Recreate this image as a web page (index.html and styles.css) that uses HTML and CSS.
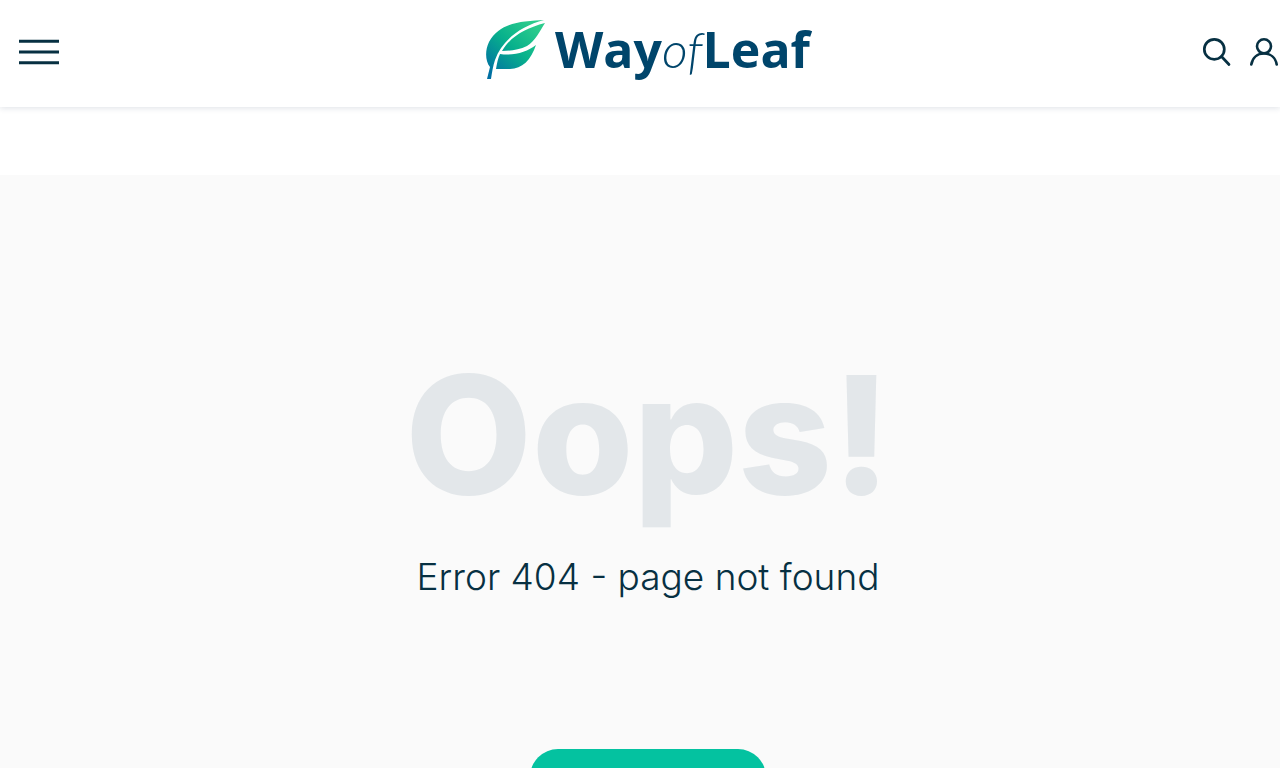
FILE: index.html
```html
<!DOCTYPE html>
<html lang="en">
<head>
<meta charset="utf-8">
<meta name="viewport" content="width=device-width, initial-scale=1">
<title>WayofLeaf</title>
<link rel="stylesheet" href="styles.css">
</head>
<body>
<header class="header">
  <button class="icon-button menu" type="button" aria-label="Menu">
    <svg width="40" height="26" viewBox="0 0 40 26" fill="none" stroke="#073042" stroke-width="3"><path d="M0 2.300H40M0 13H40M0 23.800H40"/></svg>
  </button>
  <a class="logo" href="#">
    <svg class="leaf" width="62" height="60" viewBox="0 0 62 60" aria-hidden="true">
      <defs><linearGradient id="leaf" gradientUnits="userSpaceOnUse" x1="4" y1="54" x2="48" y2="6"><stop offset="0" stop-color="#006fa3"/><stop offset=".55" stop-color="#08b18c"/><stop offset="1" stop-color="#2bcb8c"/></linearGradient></defs>
      <g fill="url(#leaf)">
        <path d="M2 60 5 48C0 42 0 31 4 23C12 8 27 4 40 2.500C47 1.500 54 1.500 59 1C36 7 17 21 10 41C8 47 7 53 6 60Z"/>
        <path d="M60 4C55 12 50 22 42 27C34 31 25 32 17 32C26 17 41 9 60 4Z"/>
        <path d="M15 35C29 37 42 33 51 26C46 41 37 50 25 50H11C12 44 13 39 15 35Z"/>
      </g>
    </svg>
    <span class="wordmark">Way<em class="wordmark-light">of</em>Leaf</span>
  </a>
  <div class="actions">
    <button class="icon-button" type="button" aria-label="Search">
      <svg width="30" height="30" viewBox="0 0 30 30" fill="none" stroke="#073042" stroke-width="2.700" stroke-linecap="round"><circle cx="12.300" cy="12.300" r="10"/><path d="M19.500 19.500 27 27.500"/></svg>
    </button>
    <button class="icon-button" type="button" aria-label="Account">
      <svg width="30" height="30" viewBox="0 0 30 30" fill="none" stroke="#073042" stroke-width="2.600" stroke-linecap="round"><circle cx="14" cy="9.300" r="7"/><path d="M1.300 27.500C2.500 20.500 7.500 16.500 14 16.500S25.500 20.500 26.700 27.500"/></svg>
    </button>
  </div>
</header>
<main class="error">
  <h1 class="error-title">Oops!</h1>
  <p class="error-text">Error 404 - page not found</p>
  <a class="home-button" href="#" aria-label="Home"></a>
</main>
</body>
</html>
```
FILE: styles.css
```css
* { box-sizing: border-box; }
body { margin: 0; background: #fff; color: #073042; font-family: Inter, sans-serif; }
.header {
  display: grid;
  grid-template-columns: 1fr auto 1fr;
  align-items: center;
  padding: 16px 0 25px 19px;
  background: #fff;
  box-shadow: 0 1px 6px rgba(20, 40, 80, .14);
}
.icon-button { display: block; padding: 6px 0 0; border: 0; background: none; }
.icon-button svg { display: block; }
.menu { justify-self: start; }
.logo { display: flex; align-items: center; gap: 8px; padding-right: 4px; color: #00456b; text-decoration: none; }
.leaf { flex: none; }
.wordmark { font: 700 50px/66px "Open Sans", sans-serif; }
.wordmark-light { font-family: Lato, sans-serif; font-weight: 300; }
.actions { display: flex; justify-content: flex-end; gap: 18px; }
.error {
  display: flex;
  flex-direction: column;
  align-items: center;
  margin-top: 68px;
  padding: 160px 0 120px 16px;
  background: #fafafa;
}
.error-title { margin: 0; color: #e3e7ea; font-size: 164px; line-height: 200px; font-weight: 800; }
.error-text { margin: 16px 0 0; font-size: 37px; line-height: 52px; font-weight: 300; text-align: center; }
.home-button { width: 236px; height: 56px; margin-top: 146px; border-radius: 28px; background: #04c2a0; }
```
